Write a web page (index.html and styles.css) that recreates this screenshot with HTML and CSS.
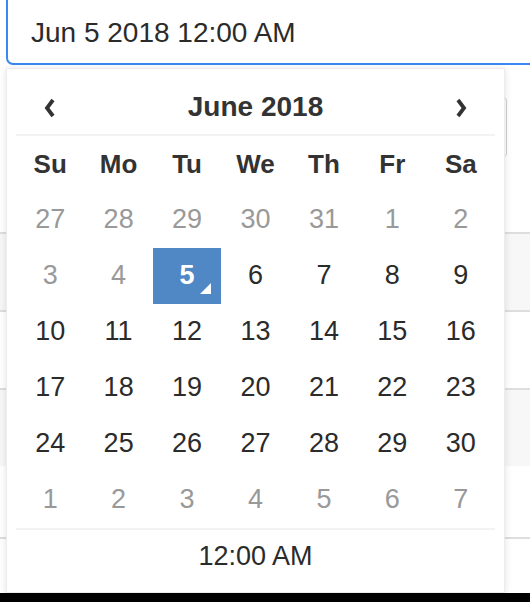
FILE: index.html
```html
<!DOCTYPE html>
<html>
<head>
    <meta charset="UTF-8">
    <title>Date time picker</title>
    <link rel="stylesheet" href="styles.css">
</head>
<body>
<div class="page">
    <div class="field">Jun 5 2018 12:00 AM</div>

    <div class="toolbar">
        <div class="btn"></div>
    </div>

    <div class="rows">
        <div class="row striped"></div>
        <div class="row"></div>
        <div class="row striped"></div>
        <div class="row plain"></div>
        <div class="row"></div>
    </div>

    <div class="picker">
        <div class="head">
            <span class="nav">
                <svg width="12" height="20" viewBox="0 0 12 20"><polyline points="9,2 3,10 9,18" fill="none" stroke="#333" stroke-width="3.8"/></svg>
            </span>
            <span class="title">June 2018</span>
            <span class="nav">
                <svg width="12" height="20" viewBox="0 0 12 20"><polyline points="3,2 9,10 3,18" fill="none" stroke="#333" stroke-width="3.8"/></svg>
            </span>
        </div>
        <div class="days">
            <span class="dow">Su</span>
            <span class="dow">Mo</span>
            <span class="dow">Tu</span>
            <span class="dow">We</span>
            <span class="dow">Th</span>
            <span class="dow">Fr</span>
            <span class="dow">Sa</span>

            <span class="day old">27</span>
            <span class="day old">28</span>
            <span class="day old">29</span>
            <span class="day old">30</span>
            <span class="day old">31</span>
            <span class="day old">1</span>
            <span class="day old">2</span>

            <span class="day old">3</span>
            <span class="day old">4</span>
            <span class="day active">5</span>
            <span class="day">6</span>
            <span class="day">7</span>
            <span class="day">8</span>
            <span class="day">9</span>

            <span class="day">10</span>
            <span class="day">11</span>
            <span class="day">12</span>
            <span class="day">13</span>
            <span class="day">14</span>
            <span class="day">15</span>
            <span class="day">16</span>

            <span class="day">17</span>
            <span class="day">18</span>
            <span class="day">19</span>
            <span class="day">20</span>
            <span class="day">21</span>
            <span class="day">22</span>
            <span class="day">23</span>

            <span class="day">24</span>
            <span class="day">25</span>
            <span class="day">26</span>
            <span class="day">27</span>
            <span class="day">28</span>
            <span class="day">29</span>
            <span class="day">30</span>

            <span class="day old">1</span>
            <span class="day old">2</span>
            <span class="day old">3</span>
            <span class="day old">4</span>
            <span class="day old">5</span>
            <span class="day old">6</span>
            <span class="day old">7</span>
        </div>
        <div class="time">12:00 AM</div>
    </div>
</div>
<div class="dock"></div>
</body>
</html>
```

FILE: styles.css
```css
* {
    margin: 0;
    padding: 0;
    box-sizing: border-box;
}

html, body {
    height: 602px;
    overflow: hidden;
}

body {
    background: #fff;
    color: #333;
    font-family: "Liberation Sans", Arial, sans-serif;
}

.page {
    position: relative;
    height: 593px;
    overflow: hidden;
}

.dock {
    height: 9px;
    background: #000;
}

/* input */
.field {
    width: 580px;
    margin: -8px 0 0 6px;
    padding: 23px 0 14px 23px;
    border: 2px solid #3c87f2;
    border-radius: 7px;
    font-size: 28px;
    line-height: 32px;
    color: #2b2b2b;
}

/* stuff behind the dropdown */
.toolbar {
    display: flex;
    justify-content: flex-end;
    margin-top: 31px;
    padding-right: 23px;
}

.toolbar .btn {
    width: 70px;
    height: 62px;
    border: 1px solid #d0d0d0;
    border-radius: 5px;
}

.rows {
    margin-top: 74px;
}

.row {
    height: 78px;
    border-top: 2px solid #dedede;
}

.row.striped {
    background: #f7f7f7;
}

.row.plain {
    height: 71px;
    border-top: none;
}

/* dropdown */
.picker {
    position: absolute;
    top: 68px;
    left: 6px;
    width: 499px;
    padding: 10px 9px;
    background: #fff;
    border: 1px solid #ececec;
    box-shadow: 0 1px 7px rgba(0, 0, 0, .12);
}

.head,
.days {
    display: grid;
    grid-template-columns: repeat(7, 1fr);
}

.head {
    height: 57px;
    align-items: center;
    border-bottom: 2px solid #f2f2f2;
}

.head .title {
    grid-column: 2 / 7;
    text-align: center;
    font-size: 28px;
    font-weight: bold;
}

.head .nav {
    display: flex;
    justify-content: center;
    padding-top: 2px;
}

.days span {
    height: 56px;
    padding-bottom: 1px;
    display: flex;
    align-items: center;
    justify-content: center;
}

.days .dow {
    font-size: 26px;
    font-weight: bold;
    padding-bottom: 0;
}

.day {
    font-size: 27px;
    color: #2b2b2b;
}

.day.old {
    color: #999;
}

.day.active {
    position: relative;
    background: #5087c5;
    color: #fff;
    font-weight: bold;
}

.day.active:after {
    content: "";
    position: absolute;
    right: 10px;
    bottom: 10px;
    border-style: solid;
    border-width: 0 0 11px 11px;
    border-color: transparent transparent #fff transparent;
}

.time {
    height: 54px;
    border-top: 2px solid #f2f2f2;
    display: flex;
    align-items: center;
    justify-content: center;
    font-size: 27px;
    color: #2b2b2b;
}
```
